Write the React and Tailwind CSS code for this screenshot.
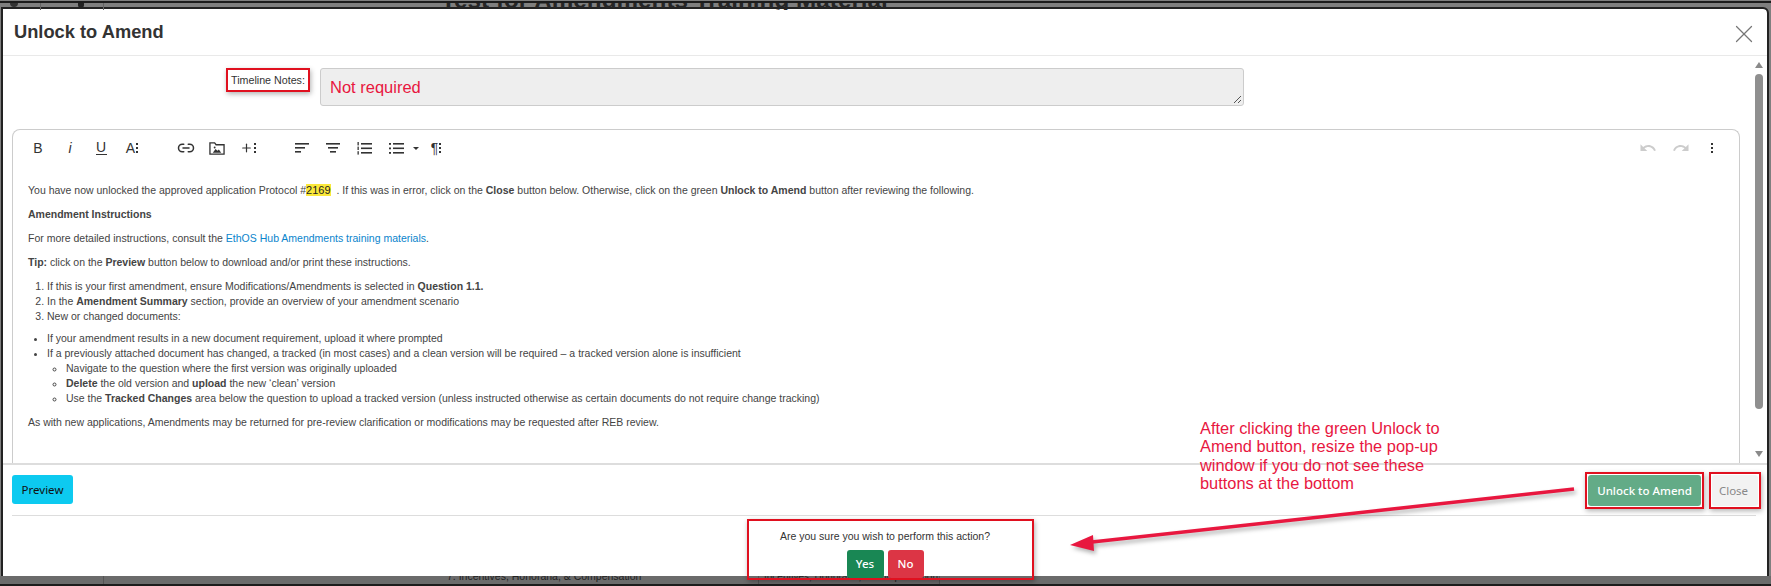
import { X, Link2, Plus } from 'lucide-react';
import { MdUndo, MdRedo } from 'react-icons/md';

const arial = "font-['Liberation_Sans',Arial,sans-serif]";

// small "more" dots that sit after some toolbar icons
function Dots({ big }) {
  const dot = big ? 'w-[2.5px] h-[2.5px] bg-[#333]' : 'w-[2px] h-[2px] bg-[#333]';
  return (
    <span className={`flex flex-col ${big ? 'gap-[1.5px]' : 'gap-[2px] ml-[1px]'}`}>
      <span className={dot} />
      <span className={dot} />
      <span className={dot} />
    </span>
  );
}

function ImageFolder() {
  return (
    <svg width="17" height="15" viewBox="0 0 17 15" fill="none" stroke="#333" strokeWidth="1.4">
      <path d="M1 13.5V1.5h5l1.5 2H16v10z" />
      <path d="M4 12l3-4 2 2 1.5-1.5L13 12z" fill="#333" stroke="none" />
      <circle cx="6" cy="6.5" r="1" fill="#333" stroke="none" />
    </svg>
  );
}

function LinesIcon({ center }) {
  return (
    <svg width="14" height="12" viewBox="0 0 14 12" fill="#333">
      <rect x="0" y="1" width="14" height="1.6" />
      {center ? <rect x="2" y="5" width="10" height="1.6" /> : <rect x="0" y="5" width="10" height="1.6" />}
      {center ? <rect x="4" y="9" width="6" height="1.6" /> : <rect x="0" y="9" width="6" height="1.6" />}
    </svg>
  );
}

function OrderedIcon() {
  return (
    <svg width="15" height="13" viewBox="0 0 15 13" fill="#333">
      <rect x="0.5" y="0" width="1.3" height="3.4" />
      <rect x="0.5" y="4.6" width="1.3" height="3.4" />
      <rect x="0.5" y="9.2" width="1.3" height="3.4" />
      <rect x="4" y="1" width="11" height="1.6" />
      <rect x="4" y="5.5" width="11" height="1.6" />
      <rect x="4" y="10" width="11" height="1.6" />
    </svg>
  );
}

function BulletIcon() {
  return (
    <svg width="15" height="13" viewBox="0 0 15 13" fill="#333">
      <rect x="0" y="1" width="2" height="1.8" />
      <rect x="0" y="5.5" width="2" height="1.8" />
      <rect x="0" y="10" width="2" height="1.8" />
      <rect x="4" y="1" width="11" height="1.6" />
      <rect x="4" y="5.5" width="11" height="1.6" />
      <rect x="4" y="10" width="11" height="1.6" />
    </svg>
  );
}

function Toolbar() {
  const tool = 'flex items-center justify-center w-[16px] h-[16px] text-[#333]';
  return (
    <div className="flex items-center h-[16px] mt-[10px] ml-[17px] mr-[24px]">
      <span className={`${tool} ${arial} text-[14px]`}>B</span>
      <span className={`${tool} ml-[16px] ${arial} text-[14px] italic`}>i</span>
      <span className={`${tool} ml-[15px] flex-col`}>
        <span className={`${arial} text-[14px] leading-[13px]`}>U</span>
        <span className="w-[11px] h-[1.5px] bg-[#333]" />
      </span>
      <span className={`${tool} ml-[15px] ${arial} text-[14px]`}>A<Dots /></span>
      <Link2 size={18} strokeWidth={2} color="#333" className="ml-[37px]" />
      <span className={`${tool} ml-[14px]`}><ImageFolder /></span>
      <span className={`${tool} ml-[15px]`}><Plus size={14} strokeWidth={2.2} color="#333" /><Dots /></span>
      <span className={`${tool} ml-[38px]`}><LinesIcon /></span>
      <span className={`${tool} ml-[15px]`}><LinesIcon center /></span>
      <span className={`${tool} ml-[15px]`}><OrderedIcon /></span>
      <span className={`${tool} ml-[16px]`}><BulletIcon /></span>
      <span className="ml-[9px] w-0 h-0 border-x-[3px] border-x-transparent border-t-[3px] border-t-[#333]" />
      <span className={`${tool} ml-[9px] ${arial} text-[14px]`}>¶<Dots /></span>
      <MdUndo size={18} color="#ccc" className="ml-auto" />
      <MdRedo size={18} color="#ccc" className="ml-[15px]" />
      <span className="ml-[21px] mr-[2px]"><Dots big /></span>
    </div>
  );
}

function EditorText() {
  return (
    <div className={`mt-[27px] pl-[15px] text-[10.5px] leading-[15px] text-[#444] ${arial}`}>
      <p>
        You have now unlocked the approved application Protocol #<mark className="bg-[#fbe83a] text-[#222] text-[11px]">2169</mark>&nbsp; . If this was in error, click on the <strong>Close</strong> button below. Otherwise, click on the green <strong>Unlock to Amend</strong> button after reviewing the following.
      </p>
      <p className="mt-[9px]"><strong>Amendment Instructions</strong></p>
      <p className="mt-[9px]">
        For more detailed instructions, consult the <a className="text-[#0a84cc]">EthOS Hub Amendments training materials</a>.
      </p>
      <p className="mt-[9px]"><strong>Tip:</strong> click on the <strong>Preview</strong> button below to download and/or print these instructions.</p>
      <ol className="mt-[9px] pl-[19px] list-decimal">
        <li>If this is your first amendment, ensure Modifications/Amendments is selected in <strong>Question 1.1.</strong></li>
        <li>In the <strong>Amendment Summary</strong> section, provide an overview of your amendment scenario</li>
        <li>New or changed documents:</li>
      </ol>
      <ul className="mt-[7px] pl-[19px] list-disc">
        <li>If your amendment results in a new document requirement, upload it where prompted</li>
        <li>If a previously attached document has changed, a tracked (in most cases) and a clean version will be required – a tracked version alone is insufficient
          <ul className="pl-[19px] list-[circle]">
            <li>Navigate to the question where the first version was originally uploaded</li>
            <li><strong>Delete</strong> the old version and <strong>upload</strong> the new ‘clean’ version</li>
            <li>Use the <strong>Tracked Changes</strong> area below the question to upload a tracked version (unless instructed otherwise as certain documents do not require change tracking)</li>
          </ul>
        </li>
      </ul>
      <p className="mt-[9px]">As with new applications, Amendments may be returned for pre-review clarification or modifications may be requested after REB review.</p>
    </div>
  );
}

function Scrollbar() {
  return (
    <div className="flex flex-col items-center w-[8px] mt-[6px] mr-[4px] ml-[15px]">
      <span className="w-0 h-0 border-x-[4px] border-x-transparent border-b-[6px] border-b-[#8a8a8a]" />
      <span className="w-[8px] h-[335px] mt-[6px] rounded-full bg-[#8f8f8f]" />
      <span className="w-0 h-0 mt-[42px] border-x-[4px] border-x-transparent border-t-[6px] border-t-[#8a8a8a]" />
    </div>
  );
}

const redBox = 'border-2 border-[#e0101f] shadow-[1px_2px_5px_rgba(0,0,0,0.3)]';
const btnFont = "font-['Noto_Sans',sans-serif]";

export default function App() {
  return (
    <div className={`relative w-[1771px] h-[586px] overflow-hidden bg-[#7f7f7f] flex flex-col ${arial}`}>
      {/* page behind the modal */}
      <div className="h-[9px] shrink-0 border-t-2 border-t-[#1c1c1c] mt-[1px] overflow-hidden relative">
        <p className="ml-[441px] -mt-[17px] text-[24.3px] leading-[28px] font-bold text-[#262626] whitespace-nowrap">Test for Amendments Training Material</p>
        <span className="absolute left-[78px] top-0 w-[6px] h-[5px] rounded-b-full bg-[#222]" />
        <span className="absolute left-[10px] top-0 w-[8px] h-[4px] rounded-b-full bg-[#333]" />
        <span className="absolute left-[40px] top-0 w-px h-[7px] bg-[#666]" />
        <span className="absolute left-[103px] top-0 w-px h-[7px] bg-[#666]" />
      </div>

      <div className="flex-1 min-h-0 ml-[3px] -mt-[1px] mr-[4px] bg-white flex flex-col outline-2 outline-[#222] rounded-tr-[4px]">
        {/* header */}
        <div className="h-[47px] shrink-0 flex items-center justify-between pl-[11px] pr-[8px] border-b border-[#e9e9e9]">
          <h1 className="text-[18.3px] font-bold text-[#333]">Unlock to Amend</h1>
          <X size={30} strokeWidth={1} color="#777" className="mt-[3px]" />
        </div>

        {/* body */}
        <div className="h-[409px] shrink-0 flex border-b-2 border-[#ddd] overflow-hidden">
          <div className="flex-1 min-w-0 pl-[9px]">
            <div className="flex items-start mt-[12px]">
              <div className="w-[298px] shrink-0 flex justify-end">
                <label className={`h-[24px] w-[84px] flex items-center justify-center text-[10.7px] text-[#333] ${redBox}`}>Timeline Notes:</label>
              </div>
              <div className="relative w-[924px] h-[38px] ml-[10px] pl-[9px] pt-[6px] bg-[#eee] border border-[#ccc] rounded-[3px] text-[16.5px] text-[#e8173f]">
                Not required
                <svg className="absolute right-[1px] bottom-[1px]" width="9" height="9" viewBox="0 0 9 9" stroke="#555" strokeWidth="1">
                  <path d="M1 8l7-7M5 8l3-3" />
                </svg>
              </div>
            </div>
            <div className="mt-[23px] h-[334px] border border-b-0 border-[#ccc] rounded-t-[8px]">
              <Toolbar />
              <EditorText />
            </div>
          </div>
          <Scrollbar />
        </div>

        {/* footer buttons */}
        <div className="ml-[9px] mr-[11px] pb-[6px] pt-[7px] flex items-center justify-between border-b border-[#ddd]">
          <button className={`w-[61px] h-[29px] mb-[2px] bg-[#0dcaf0] rounded-[3px] text-[11.5px] text-[#111] ${btnFont}`}>Preview</button>
          <div className="flex gap-[5px] -mr-[5px]">
            <div className={`p-[1px] ${redBox}`}>
              <button className={`w-[113px] h-[31px] bg-[#63ab87] rounded-[3px] text-[11.5px] font-medium text-white ${btnFont}`}>Unlock to Amend</button>
            </div>
            <div className={`p-[1px] ${redBox}`}>
              <button className={`w-[46px] h-[31px] pr-[3px] bg-[#f2f2f2] rounded-[3px] text-[11.5px] text-[#888] ${btnFont}`}>Close</button>
            </div>
          </div>
        </div>

        {/* confirmation */}
        <div className="flex-1 relative">
          <div className={`absolute left-[744px] top-[3px] w-[287px] h-[61px] z-10 flex flex-col items-center pt-[8px] pr-[11px] ${redBox}`}>
            <p className="text-[10.5px] leading-[15px] text-[#333]">Are you sure you wish to perform this action?</p>
            <div className="flex gap-[4px] mt-[6px]">
              <button className={`w-[37px] h-[28px] bg-[#198754] rounded-[3px] text-[11.5px] font-medium text-white ${btnFont}`}>Yes</button>
              <button className={`w-[36px] h-[28px] bg-[#dc3545] rounded-[3px] text-[11.5px] font-medium text-white ${btnFont}`}>No</button>
            </div>
          </div>
        </div>
      </div>

      {/* page behind the modal, bottom */}
      <div className="h-[10px] shrink-0 bg-[#6b6b6b] relative overflow-hidden border-b-2 border-b-[#1c1c1c]">
        <span className="absolute left-[447px] -top-[7px] text-[10.5px] leading-[15px] text-[#222] whitespace-nowrap">7. Incentives, Honoraria, &amp; Compensation</span>
        <span className="absolute left-[764px] -top-[7px] text-[10px] leading-[15px] text-[#222] whitespace-nowrap">Incentives, Honoraria, &amp; Compensation</span>
        <span className="absolute left-[103px] top-0 w-px h-full bg-[#555]" />
        <span className="absolute left-[758px] top-0 w-px h-full bg-[#555]" />
        <span className="absolute left-[939px] top-0 w-px h-full bg-[#555]" />
      </div>

      {/* annotation */}
      <p className="absolute left-[1200px] top-[419px] w-[262px] text-[16.4px] leading-[18.4px] text-[#e8173f]">
        After clicking the green Unlock to Amend button, resize the pop-up window if you do not see these buttons at the bottom
      </p>
      <svg className="absolute left-0 top-0 pointer-events-none drop-shadow-[2px_3px_2px_rgba(0,0,0,0.3)]" width="1771" height="586" fill="none">
        <path d="M1574 489 L1092 542" stroke="#e8173f" strokeWidth="3.5" />
        <path d="M1070 545 L1093 535 L1094 551 Z" fill="#e8173f" />
      </svg>
    </div>
  );
}
